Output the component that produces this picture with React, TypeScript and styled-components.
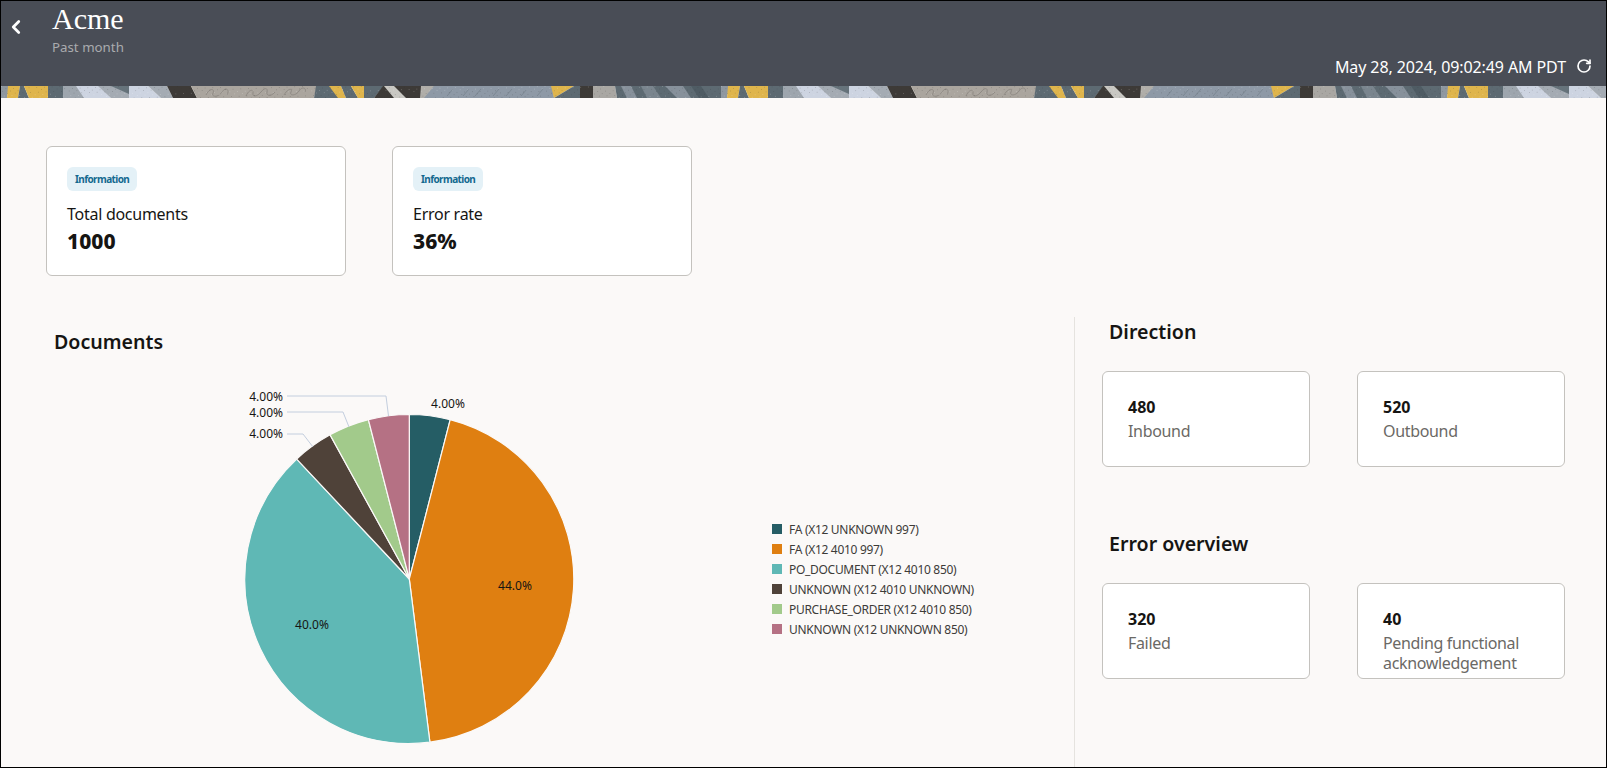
import styled, { createGlobalStyle } from 'styled-components'
import { ChevronLeft, RotateCw } from 'lucide-react'

const GlobalStyle = createGlobalStyle`
    html, body {
        margin: 0;
        padding: 0;
        background: #fff;
    }
    * {
        box-sizing: border-box;
    }
`

const sans = `"Noto Sans", "Open Sans", sans-serif`

const Page = styled.div`
    display: flex;
    flex-direction: column;
    width: 1607px;
    height: 768px;
    overflow: hidden;
    border: 1px solid #000;
    background: #fbf9f8;
    color: #161513;
    font-family: ${sans};
`

const Header = styled.header`
    display: flex;
    flex: none;
    height: 85px;
    background: #494d56;
    color: #fff;
`

const BackButton = styled.button`
    flex: none;
    align-self: flex-start;
    display: flex;
    width: 51px;
    height: 20px;
    margin-top: 15px;
    padding: 0 0 0 4px;
    border: 0;
    background: none;
    color: #fff;
`

const TitleBlock = styled.div`
    flex: 1;
`

const Title = styled.h1`
    margin: -1px 0 0;
    font-family: "Liberation Serif", serif;
    font-size: 30px;
    font-weight: 400;
    line-height: 37px;
`

const Subtitle = styled.div`
    margin-top: 1px;
    color: #a9abae;
    font-size: 13.3px;
    line-height: 18px;
`

const Timestamp = styled.div`
    display: flex;
    align-items: center;
    align-self: flex-start;
    gap: 10px;
    margin-top: 54px;
    padding-right: 14px;
    font-size: 16px;
    letter-spacing: -0.1px;
    line-height: 24px;
`

const RefreshIcon = styled(RotateCw)`
    margin-top: -3px;
`

const BannerStrip = styled.svg`
    display: block;
    flex: none;
    width: 100%;
    height: 12px;
`

const KpiRow = styled.section`
    display: flex;
    flex: none;
    gap: 46px;
    padding: 48px 0 0 45px;
`

const Card = styled.article`
    overflow: hidden;
    border: 1px solid #c4c2be;
    border-radius: 6px;
    background: #fff;
`

const KpiCard = styled(Card)`
    width: 300px;
    height: 130px;
    padding: 19px 20px;
`

const Badge = styled.span`
    display: inline-block;
    height: 24px;
    padding: 0 8px;
    border-radius: 6px;
    background: #e4f1f7;
    color: #14698f;
    font-size: 10px;
    font-weight: 700;
    letter-spacing: -0.6px;
    line-height: 25px;
`

const KpiLabel = styled.div`
    margin-top: 12px;
    font-size: 16px;
    letter-spacing: -0.27px;
    line-height: 22px;
`

const KpiValue = styled.div`
    margin-top: 1px;
    font-size: 21px;
    font-weight: 800;
    line-height: 30px;
`

const Split = styled.div`
    display: flex;
    flex: 1;
    min-height: 0;
    margin-top: 41px;
`

const ChartPanel = styled.section`
    flex: none;
    width: 1073px;
    padding: 12px 0 0 53px;
`

const SectionTitle = styled.h2`
    margin: 0;
    font-size: 19.6px;
    font-weight: 600;
    line-height: 26px;
`

const ChartRow = styled.div`
    display: flex;
    align-items: center;
    height: 380px;
    margin: 34px 0 0 176px;
`

const PieSvg = styled.svg`
    display: block;
    flex: none;
    overflow: visible;
`

const SliceLabel = styled.text`
    fill: #161513;
    font-family: ${sans};
    font-size: 12px;
`

const Leader = styled.polyline`
    fill: none;
    stroke: #c3cede;
    stroke-width: 1;
`

const Legend = styled.ul`
    margin: 0 0 0 182px;
    padding: 0;
    list-style: none;
`

const LegendItem = styled.li`
    display: flex;
    align-items: center;
    gap: 7px;
    height: 20px;
    color: #3d3b38;
    font-size: 12px;
    letter-spacing: -0.3px;
    white-space: nowrap;
`

const Swatch = styled.span<{ $color: string }>`
    flex: none;
    width: 10px;
    height: 10px;
    background: ${(props) => props.$color};
`

const SidePanel = styled.aside`
    flex: 1;
    padding: 2px 0 0 27px;
    border-left: 1px solid #e5e3df;
`

const SideTitle = styled(SectionTitle)<{ $spaced?: boolean }>`
    margin: ${(props) => (props.$spaced ? '64px' : '0')} 0 26px 7px;
`

const StatGrid = styled.div`
    display: grid;
    grid-template-columns: repeat(2, 208px);
    gap: 47px;
`

const StatCard = styled(Card)`
    height: 96px;
    padding: 23px 25px 0;
`

const StatValue = styled.div`
    font-size: 16px;
    font-weight: 700;
    line-height: 24px;
`

const StatLabel = styled.div`
    margin-top: 2px;
    color: #6b6965;
    font-size: 16px;
    letter-spacing: -0.33px;
    line-height: 20px;
`

const slices = [
    { name: 'FA (X12 UNKNOWN 997)', share: 4, color: '#255d65' },
    { name: 'FA (X12 4010 997)', share: 44, color: '#df7f11' },
    { name: 'PO_DOCUMENT (X12 4010 850)', share: 40, color: '#5fb8b5' },
    { name: 'UNKNOWN (X12 4010 UNKNOWN)', share: 4, color: '#4f4239' },
    { name: 'PURCHASE_ORDER (X12 4010 850)', share: 4, color: '#a2ca8b' },
    { name: 'UNKNOWN (X12 UNKNOWN 850)', share: 4, color: '#b57184' },
]

// svg origin sits at page (230, 389)
const cx = 179.3
const cy = 190
const radius = 164.5

function slicePath(from: number, to: number): string {
    const point = (share: number) => {
        const angle = (share / 100) * Math.PI * 2
        return `${cx + radius * Math.sin(angle)} ${cy - radius * Math.cos(angle)}`
    }
    const large = to - from > 50 ? 1 : 0
    return `M${cx} ${cy}L${point(from)}A${radius} ${radius} 0 ${large} 1 ${point(to)}Z`
}

function PieChart() {
    let total = 0
    return (
        <PieSvg width={360} height={380} viewBox="0 0 360 380">
            {slices.map((slice) => {
                const from = total
                total += slice.share
                return (
                    <path
                        key={slice.name}
                        d={slicePath(from, total)}
                        fill={slice.color}
                        stroke="#fbf9f8"
                        strokeWidth={1.2}
                    />
                )
            })}
            <Leader points="57,7 156,7 158.5,27" />
            <Leader points="57,23 113,23 119,38" />
            <Leader points="57,45 73,45 83,58" />
            <SliceLabel x={53} y={12} textAnchor="end">4.00%</SliceLabel>
            <SliceLabel x={53} y={28} textAnchor="end">4.00%</SliceLabel>
            <SliceLabel x={53} y={49} textAnchor="end">4.00%</SliceLabel>
            <SliceLabel x={218} y={19} textAnchor="middle">4.00%</SliceLabel>
            <SliceLabel x={285} y={201} textAnchor="middle">44.0%</SliceLabel>
            <SliceLabel x={82} y={240} textAnchor="middle">40.0%</SliceLabel>
        </PieSvg>
    )
}

const SLATE = '#5d6a72'
const bannerShapes: [string, string][] = [
    ['#8e97a0', '0,0 8,0 6,12 0,12'],
    ['#dfb54c', '7,0 19,0 17,12 6,12'],
    [SLATE, '19,0 23,0 28,12 17,12'],
    ['#dfb54c', '23,0 47,0 47,12 28,12'],
    [SLATE, '47,0 62,0 62,12 47,12'],
    ['#9ea6ae', '62,0 76,0 84,12 62,12'],
    ['#cdd4e1', '75,0 98,0 110,12 83,12'],
    ['#a4abb3', '97,0 128,0 128,12 110,12'],
    ['#66737b', '110,0 128,0 128,8'],
    ['#cdd4e1', '128,0 147,0 160,12 128,12'],
    ['#a4abb3', '147,0 166,0 172,12 160,12'],
    ['#3d3a37', '166,0 190,0 196,12 172,12'],
    ['#aaa59e', '190,0 316,0 313,12 196,12'],
    [SLATE, '315,0 329,0 338,12 313,12'],
    ['#dfb54c', '328,0 340,0 345,12 337,12'],
    [SLATE, '340,0 350,0 357,12 345,12'],
    ['#dfb54c', '350,0 363,0 363,12 357,12'],
    [SLATE, '363,0 383,0 373,12 363,12'],
    ['#3d3a37', '382,0 433,0 423,12 373,12'],
    ['#c9c8c3', '383,0 393,0 405,12 393,12'],
    ['#b0aea9', '420,0 433,0 425,12 419,12'],
    ['#8e99a6', '433,0 552,0 553,12 423,12'],
    ['#dfb54c', '550,0 573,0 553,12'],
    [SLATE, '573,0 579,0 579,12 553,12'],
    ['#3d3a37', '579,0 592,0 592,12 579,12'],
    ['#a9a7a3', '592,0 614,0 616,12 592,12'],
    [SLATE, '614,0 720,0 720,12 616,12'],
    ['#87919b', '620,0 630,0 636,12 626,12'],
    ['#7a858e', '640,0 652,0 660,12 646,12'],
    ['#87919b', '664,0 682,0 690,12 676,12'],
    ['#4f5c64', '690,0 700,0 708,12 698,12'],
]

const squiggles = [
    'M205 9c4-8 9-6 7-2s5 5 9-1 8-2 5 3',
    'M245 10c3-7 8-7 7-3s4 4 8-1 7-4 6 0 4 5 8 0',
    'M283 9c4-7 9-7 7-3s5 4 8-1 8-3 6 1',
]

const dashes = [446, 462, 474, 492, 505, 520, 536]

// fixed pseudo random speckle, so the strip draws the same on every load
const speckle = Array.from({ length: 420 }, (_, i) => ({
    x: (i * 137.51) % 720,
    y: (i * 61.7) % 12,
    light: i % 3 === 0,
}))

function Banner() {
    return (
        <BannerStrip aria-hidden="true">
            <defs>
                <pattern
                    id="strip"
                    width={720}
                    height={12}
                    patternUnits="userSpaceOnUse"
                >
                    {bannerShapes.map(([color, points]) => (
                        <polygon key={points} fill={color} points={points} />
                    ))}
                    {squiggles.map((d) => (
                        <path
                            key={d}
                            d={d}
                            fill="none"
                            stroke="#8f8a84"
                            strokeWidth={1}
                        />
                    ))}
                    {dashes.map((x) => (
                        <line
                            key={x}
                            x1={x}
                            y1={10}
                            x2={x + 6}
                            y2={3}
                            stroke="#737e8a"
                            strokeWidth={0.7}
                        />
                    ))}
                    {speckle.map((dot) => (
                        <rect
                            key={dot.x}
                            x={dot.x}
                            y={dot.y}
                            width={0.8}
                            height={0.8}
                            fill={dot.light ? '#ffffff' : '#2b2b2b'}
                            opacity={0.28}
                        />
                    ))}
                </pattern>
            </defs>
            <rect width="100%" height="12" fill="url(#strip)" />
        </BannerStrip>
    )
}

const kpis = [
    { label: 'Total documents', value: '1000' },
    { label: 'Error rate', value: '36%' },
]

const direction = [
    { label: 'Inbound', value: '480' },
    { label: 'Outbound', value: '520' },
]

const errors = [
    { label: 'Failed', value: '320' },
    { label: 'Pending functional acknowledgement', value: '40' },
]

function StatCards({ items }: { items: { label: string; value: string }[] }) {
    return (
        <StatGrid>
            {items.map((item) => (
                <StatCard key={item.label}>
                    <StatValue>{item.value}</StatValue>
                    <StatLabel>{item.label}</StatLabel>
                </StatCard>
            ))}
        </StatGrid>
    )
}

export default function App() {
    return (
        <Page>
            <GlobalStyle />
            <Header>
                <BackButton aria-label="Back">
                    <ChevronLeft size={22} strokeWidth={3} />
                </BackButton>
                <TitleBlock>
                    <Title>Acme</Title>
                    <Subtitle>Past month</Subtitle>
                </TitleBlock>
                <Timestamp>
                    May 28, 2024, 09:02:49 AM PDT
                    <RefreshIcon size={16} strokeWidth={2.5} />
                </Timestamp>
            </Header>
            <Banner />
            <KpiRow>
                {kpis.map((kpi) => (
                    <KpiCard key={kpi.label}>
                        <Badge>Information</Badge>
                        <KpiLabel>{kpi.label}</KpiLabel>
                        <KpiValue>{kpi.value}</KpiValue>
                    </KpiCard>
                ))}
            </KpiRow>
            <Split>
                <ChartPanel>
                    <SectionTitle>Documents</SectionTitle>
                    <ChartRow>
                        <PieChart />
                        <Legend>
                            {slices.map((slice) => (
                                <LegendItem key={slice.name}>
                                    <Swatch $color={slice.color} />
                                    {slice.name}
                                </LegendItem>
                            ))}
                        </Legend>
                    </ChartRow>
                </ChartPanel>
                <SidePanel>
                    <SideTitle>Direction</SideTitle>
                    <StatCards items={direction} />
                    <SideTitle $spaced>Error overview</SideTitle>
                    <StatCards items={errors} />
                </SidePanel>
            </Split>
        </Page>
    )
}
